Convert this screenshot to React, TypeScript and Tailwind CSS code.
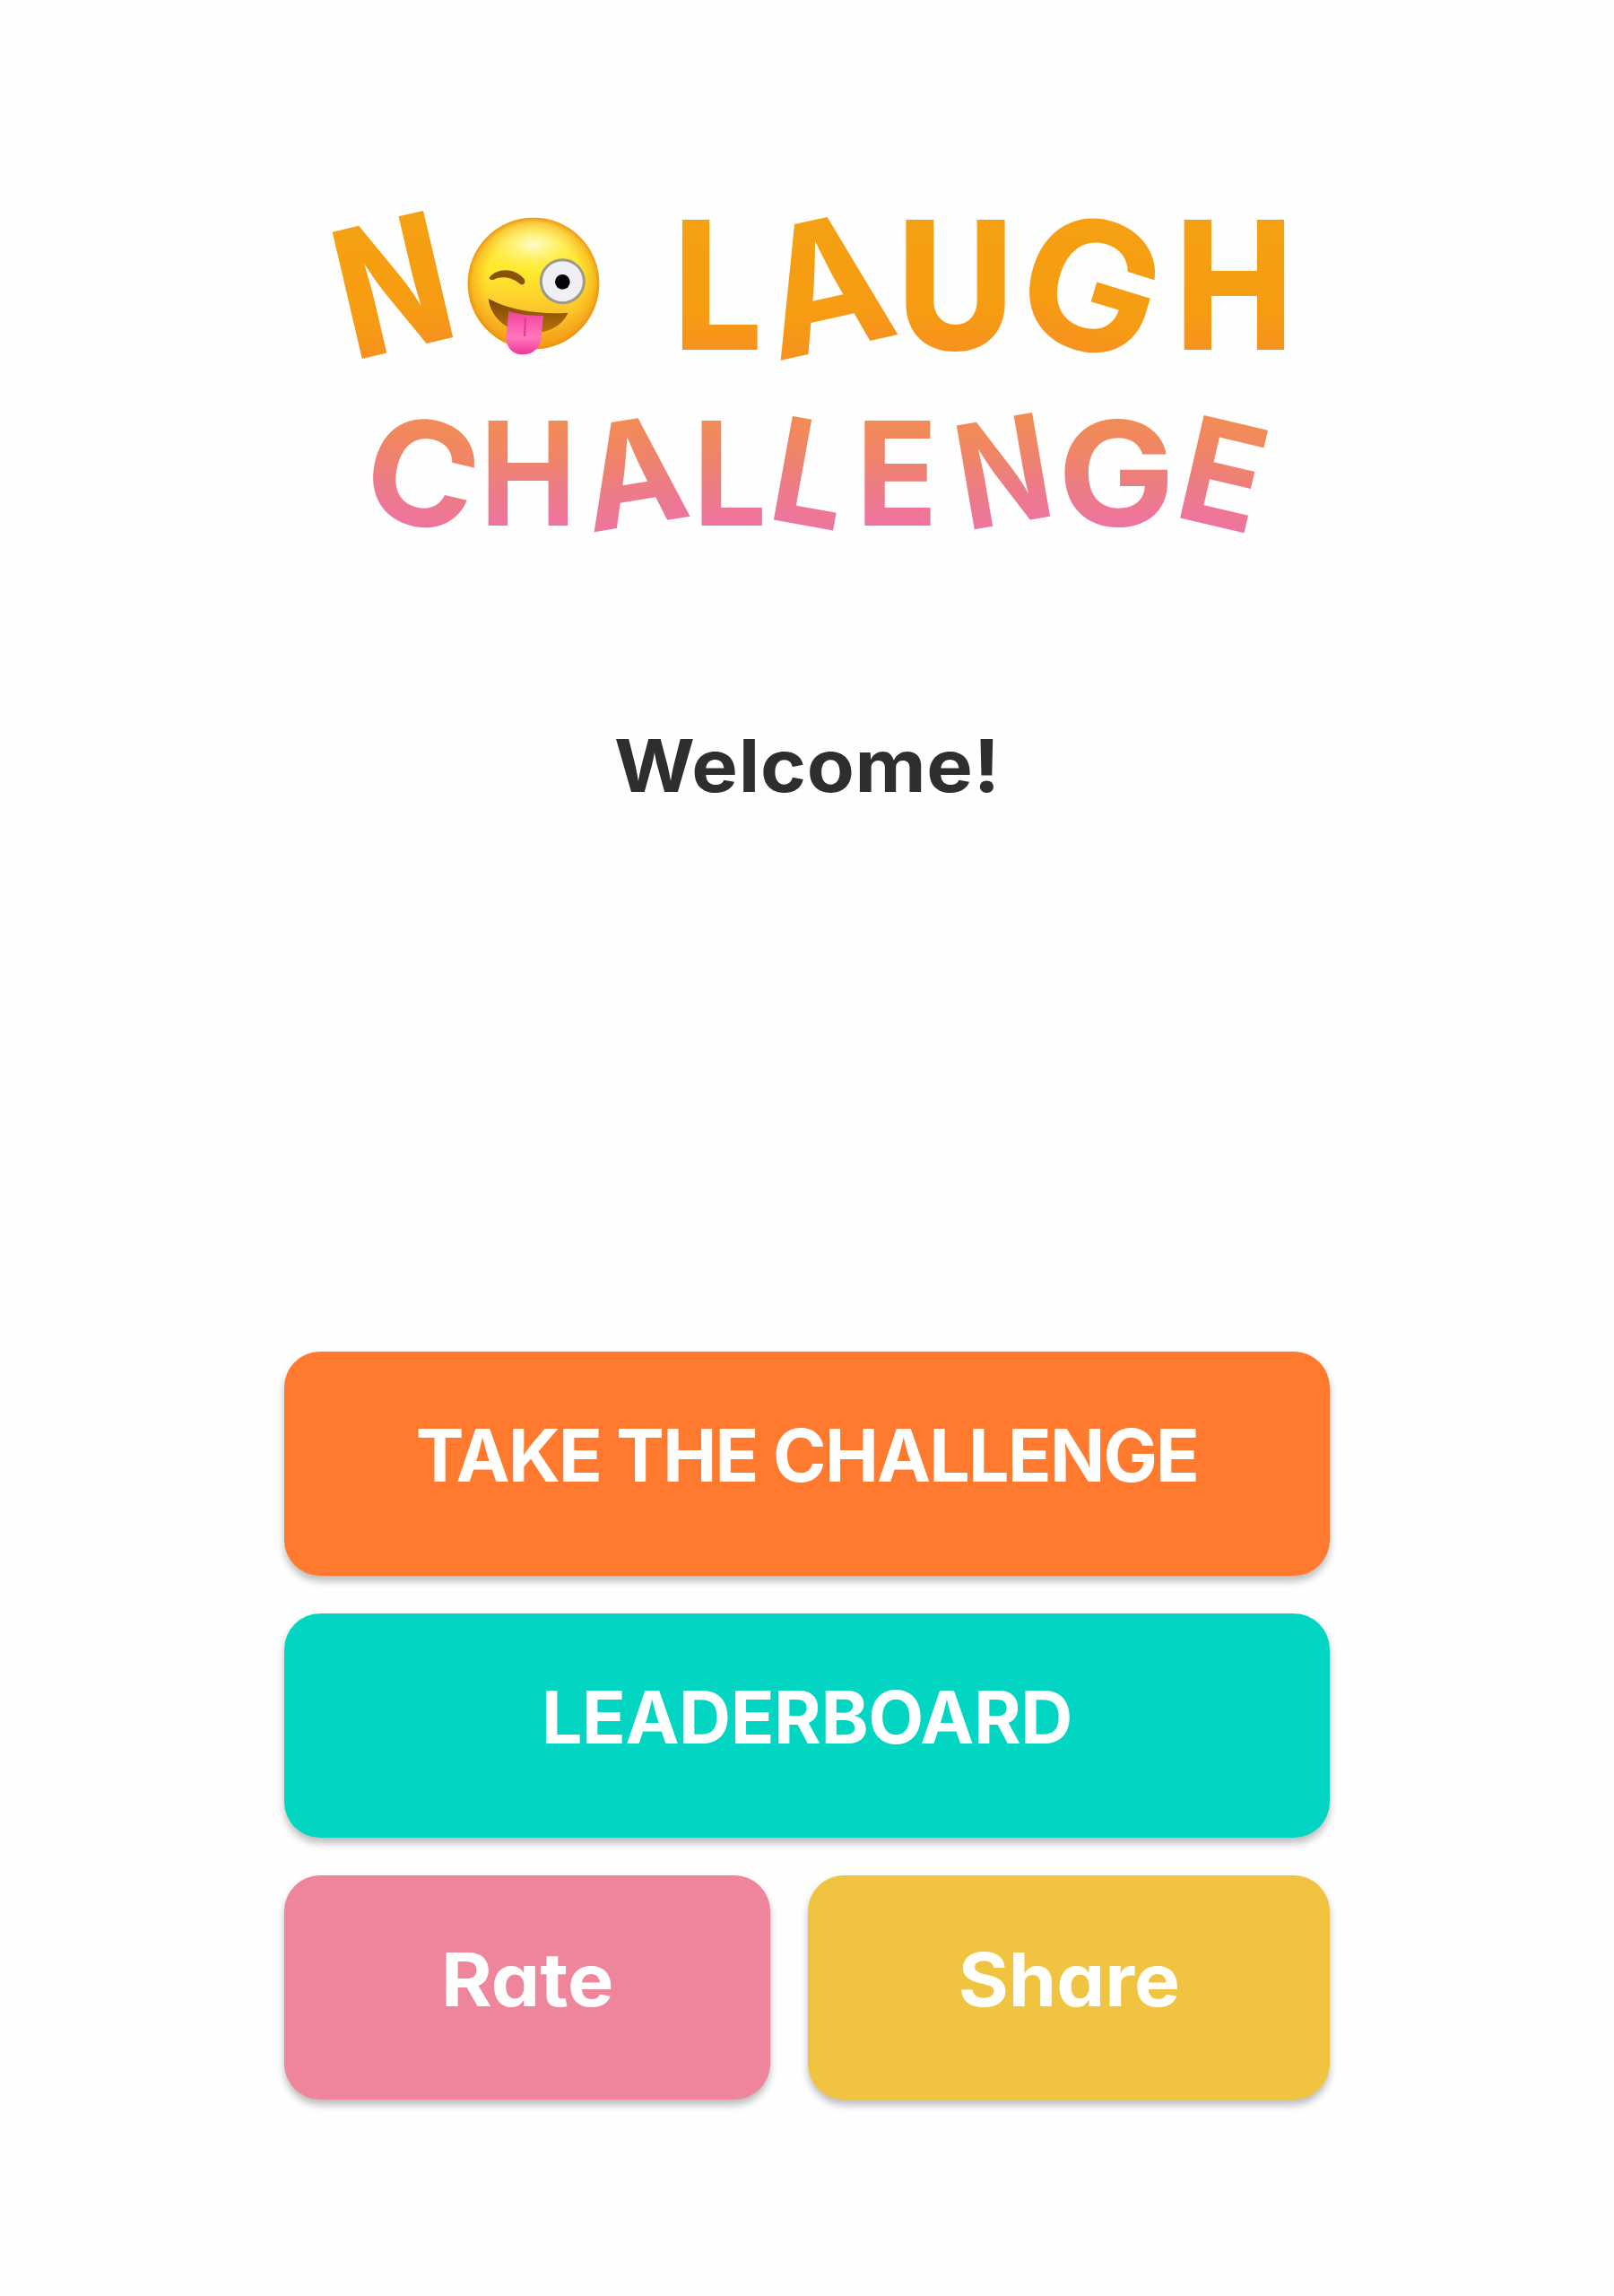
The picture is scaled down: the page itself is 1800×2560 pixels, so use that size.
import clsx from 'clsx';

type LetterT = {
  char: string;
  x: number;
  y: number;
  rotate?: number;
  stretch: number;
  weight?: number;
};

// x / y is the middle of each letter's baseline
const topLetters: LetterT[] = [
  { char: 'N', x: 454.5, y: 388, rotate: -13.2, stretch: 0.8, weight: 820 },
  { char: 'L', x: 800.5, y: 390, stretch: 0.88, weight: 790 },
  { char: 'A', x: 936, y: 387.5, rotate: -12.4, stretch: 0.96 },
  { char: 'U', x: 1065.5, y: 390, stretch: 0.9, weight: 790 },
  { char: 'G', x: 1196, y: 387, rotate: 17, stretch: 1.03, weight: 720 },
  { char: 'H', x: 1376.5, y: 390, stretch: 0.88, weight: 800 },
];

const bottomLetters: LetterT[] = [
  { char: 'C', x: 458, y: 584.5, rotate: 13, stretch: 1.04, weight: 650 },
  { char: 'H', x: 589, y: 585.5, stretch: 0.89 },
  { char: 'A', x: 716, y: 584.5, rotate: -9.3, stretch: 0.96, weight: 720 },
  { char: 'L', x: 814, y: 585.5, stretch: 0.9 },
  { char: 'L', x: 894, y: 585, rotate: 10.3, stretch: 0.9 },
  { char: 'E', x: 1000, y: 585.5, stretch: 0.93 },
  { char: 'N', x: 1129, y: 583, rotate: -9.8, stretch: 0.84 },
  { char: 'G', x: 1245, y: 585.5, stretch: 1.08, weight: 650 },
  { char: 'E', x: 1351, y: 585.5, rotate: 13.1, stretch: 0.93 },
];

const Letter = ({ item, size, fill }: { item: LetterT; size: number; fill: string }) => (
  <text
    transform={`translate(${item.x} ${item.y}) rotate(${item.rotate ?? 0}) scale(${item.stretch} 1)`}
    fontSize={size}
    fontWeight={item.weight ?? 750}
    textAnchor="middle"
    fill={fill}
  >
    {item.char}
  </text>
);

const WinkFace = () => (
  <g transform="translate(510 230) scale(0.3333)">
    <circle cx="255" cy="258" r="220" fill="url(#face)" />
    <circle cx="255" cy="258" r="220" fill="url(#faceEdge)" />
    <ellipse cx="255" cy="130" rx="150" ry="85" fill="url(#shine)" />
    <path
      d="M108 238 C130 208 190 202 224 244 C230 256 222 266 212 261 C182 236 150 232 122 245 C112 248 106 244 108 238 Z"
      fill="#8a5208"
    />
    <circle cx="352" cy="251" r="72" fill="#f1eff6" stroke="#9d9a88" strokeWidth="9" />
    <circle cx="352" cy="253" r="25" fill="#050505" />
    <path
      d="M104 309 C180 352 290 362 370 356 C352 400 300 428 236 424 C160 416 112 370 104 309 Z"
      fill="url(#mouth)"
    />
    <path
      d="M172 350 C200 362 250 366 288 366 L281 440 C278 476 250 496 218 496 C186 496 162 472 163 438 Z"
      fill="url(#tongue)"
    />
    <path d="M228 375 L225 432" stroke="#e83a93" strokeWidth="7" strokeLinecap="round" />
  </g>
);

const Logo = () => (
  <svg
    className="h-[400px] w-[1100px] overflow-visible font-['Inter',sans-serif]"
    viewBox="350 220 1100 400"
    role="img"
    aria-label="No Laugh Challenge"
  >
    <defs>
      <linearGradient id="top" gradientUnits="userSpaceOnUse" x1="0" y1="-145" x2="0" y2="0">
        <stop offset="0" stopColor="#f5a013" />
        <stop offset="0.7" stopColor="#f79c12" />
        <stop offset="1" stopColor="#f6921f" />
      </linearGradient>
      <linearGradient id="bottom" gradientUnits="userSpaceOnUse" x1="0" y1="-118" x2="0" y2="0">
        <stop offset="0" stopColor="#f28c55" />
        <stop offset="0.35" stopColor="#f08468" />
        <stop offset="0.65" stopColor="#ec7c85" />
        <stop offset="1" stopColor="#ee749e" />
      </linearGradient>
      <linearGradient id="face" x1="0" y1="0" x2="0" y2="1">
        <stop offset="0" stopColor="#ffee58" />
        <stop offset="0.4" stopColor="#feea2e" />
        <stop offset="0.7" stopColor="#fcc62b" />
        <stop offset="1" stopColor="#f8a01c" />
      </linearGradient>
      <radialGradient id="faceEdge">
        <stop offset="0.72" stopColor="#f59a14" stopOpacity="0" />
        <stop offset="0.92" stopColor="#f39a12" stopOpacity="0.5" />
        <stop offset="1" stopColor="#e8900c" stopOpacity="0.9" />
      </radialGradient>
      <radialGradient id="shine">
        <stop offset="0" stopColor="#fffde0" stopOpacity="0.9" />
        <stop offset="1" stopColor="#fff36a" stopOpacity="0" />
      </radialGradient>
      <linearGradient id="mouth" x1="0" y1="0" x2="0" y2="1">
        <stop offset="0" stopColor="#7c4503" />
        <stop offset="1" stopColor="#b8730a" />
      </linearGradient>
      <linearGradient id="tongue" x1="0" y1="0" x2="0" y2="1">
        <stop offset="0" stopColor="#f0429c" />
        <stop offset="0.6" stopColor="#ff76bd" />
        <stop offset="1" stopColor="#f0379a" />
      </linearGradient>
    </defs>
    {topLetters.map((item, i) => (
      <Letter key={i} item={item} size={199.4} fill="url(#top)" />
    ))}
    <WinkFace />
    {bottomLetters.map((item, i) => (
      <Letter key={i} item={item} size={161.4} fill="url(#bottom)" />
    ))}
  </svg>
);

const MenuButton = ({
  label,
  className,
  labelClassName,
}: {
  label: string;
  className: string;
  labelClassName: string;
}) => (
  <button
    type="button"
    className={clsx(
      'flex h-[250px] items-center justify-center rounded-[40px] pb-[18px] font-bold text-white shadow-[0_6px_8px_rgba(0,0,0,0.26)]',
      className,
    )}
  >
    <span className={labelClassName}>{label}</span>
  </button>
);

export default function App() {
  return (
    <main className="flex h-[2560px] w-full flex-col items-center bg-[#fefefe] pt-[220px] font-['Inter',sans-serif] [font-feature-settings:'cv11']">
      <Logo />
      <h1 className="mt-[184px] scale-x-[1.07] text-[81px] leading-[100px] font-[650] tracking-[0.7px] text-[#2e2e2e]">
        Welcome!
      </h1>
      <div className="mt-[603px] flex w-[1166px] flex-col gap-[42px]">
        <MenuButton
          label="TAKE THE CHALLENGE"
          className="bg-[#ff7a2e]"
          labelClassName="text-[80.5px] tracking-[-1.8px]"
        />
        <MenuButton
          label="LEADERBOARD"
          className="bg-[#02d6c3]"
          labelClassName="text-[80.5px] tracking-[-0.5px]"
        />
        <div className="flex gap-[42px]">
          <MenuButton
            label="Rate"
            className="w-[542px] bg-[#ee859a]"
            labelClassName="scale-x-[1.055] text-[82px]"
          />
          <MenuButton
            label="Share"
            className="w-[582px] bg-[#f0c441]"
            labelClassName="scale-x-[1.045] text-[82px]"
          />
        </div>
      </div>
    </main>
  );
}
